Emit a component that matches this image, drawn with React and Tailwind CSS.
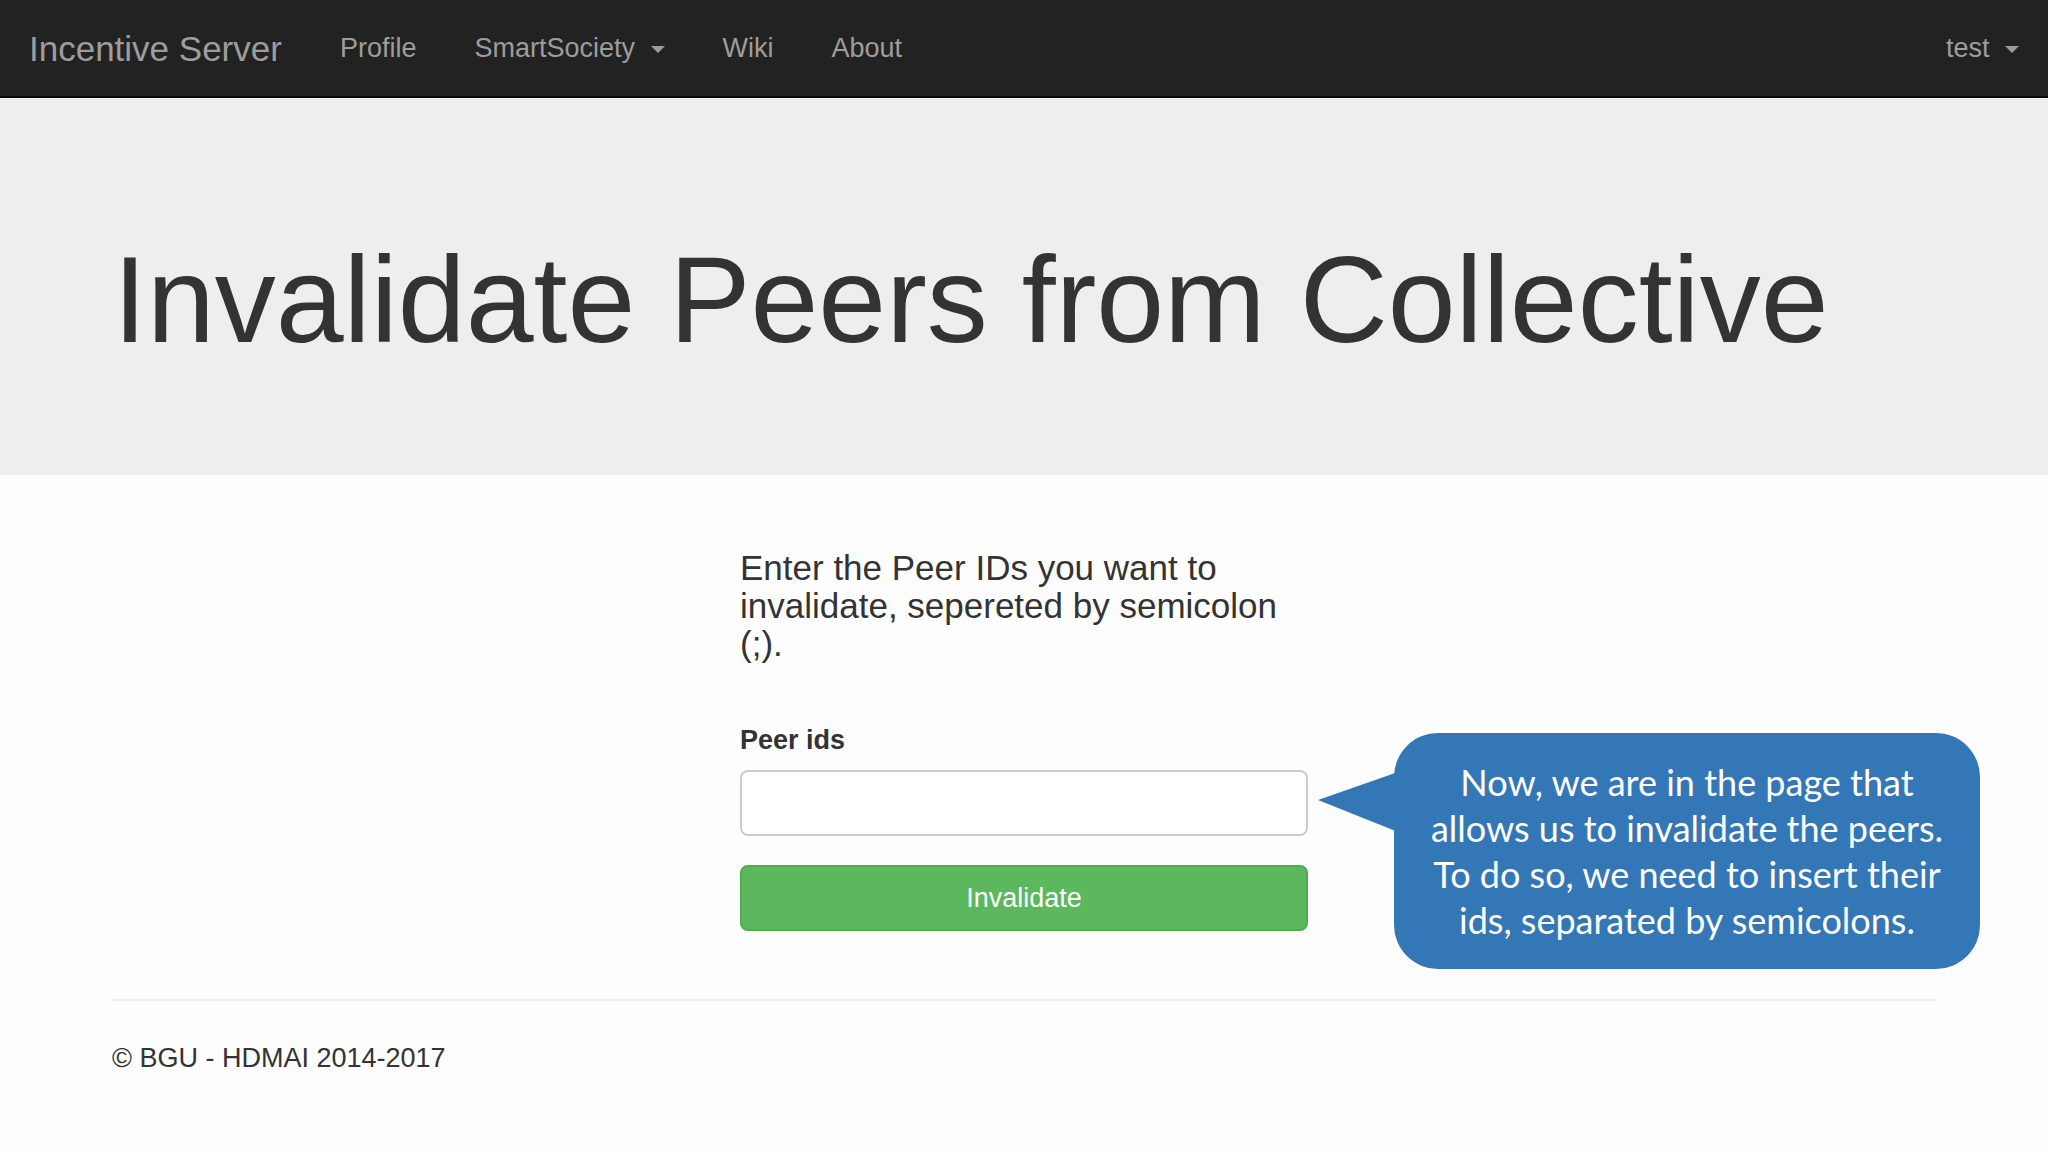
import React from 'react';

const Caret = () => (
  <span className="inline-block ml-[8px] align-middle w-0 h-0 border-l-[7px] border-r-[7px] border-t-[7px] border-l-transparent border-r-transparent border-t-[#9d9d9d]" />
);

export default function App() {
  return (
    <div className="relative min-h-[1152px] bg-[#fdfdfd] font-['Liberation_Sans',Arial,sans-serif] text-[#333]">
      {/* Navbar */}
      <nav className="h-[98px] bg-[#222] border-b-2 border-[#080808] flex items-center justify-between px-[29px] pt-[1px] text-[#9d9d9d]">
        <div className="flex items-center">
          <span className="text-[35px] leading-none pr-[29px]">Incentive Server</span>
          <ul className="flex items-center text-[27px] leading-none">
            <li className="px-[29px]">Profile</li>
            <li className="px-[29px]">
              SmartSociety <Caret />
            </li>
            <li className="px-[29px]">Wiki</li>
            <li className="px-[29px]">About</li>
          </ul>
        </div>
        <div className="text-[27px] leading-none">
          test <Caret />
        </div>
      </nav>

      {/* Jumbotron */}
      <div className="bg-[#eeeef0] pt-[135px] pb-[108px]">
        <h1 className="pl-[113px] text-[122px] leading-[134px] text-[#333] whitespace-nowrap">
          Invalidate Peers from Collective
        </h1>
      </div>

      {/* Form */}
      <div className="mx-auto w-[568px] pt-[74px]">
        <h4 className="text-[35px] leading-[38px]">
          Enter the Peer IDs you want to invalidate, sepereted by semicolon (;).
        </h4>
        <label className="block mt-[58px] text-[27px] leading-[39px] font-bold">Peer ids</label>
        <input
          type="text"
          className="block mt-[10px] w-full h-[66px] rounded-[8px] border-2 border-[#ccc] bg-white px-[22px] text-[27px] outline-none"
        />
        <button className="mt-[29px] w-full h-[66px] rounded-[8px] bg-[#5cb85c] border-2 border-[#4cae4c] text-white text-[27px]">
          Invalidate
        </button>
      </div>

      {/* Footer */}
      <div className="mx-auto w-[1824px] mt-[68px]">
        <hr className="border-t-2 border-[#eee]" />
        <p className="mt-[38px] text-[27px] leading-[38px]">© BGU - HDMAI 2014-2017</p>
      </div>

      {/* Callout */}
      <div className="absolute left-[1318px] top-[733px] flex items-start">
        <svg width="80" height="60" viewBox="0 0 80 60" className="mt-[39px] -mr-[4px]">
          <polygon points="0,28 80,0 80,60" fill="#3477b6" />
        </svg>
        <div className="w-[586px] h-[236px] rounded-[44px] bg-[#3477b6] flex items-center justify-center text-center text-white font-['Lato',sans-serif] text-[36px] leading-[46px]">
          <p>
            Now, we are in the page that
            <br />
            allows us to invalidate the peers.
            <br />
            To do so, we need to insert their
            <br />
            ids, separated by semicolons.
          </p>
        </div>
      </div>
    </div>
  );
}
